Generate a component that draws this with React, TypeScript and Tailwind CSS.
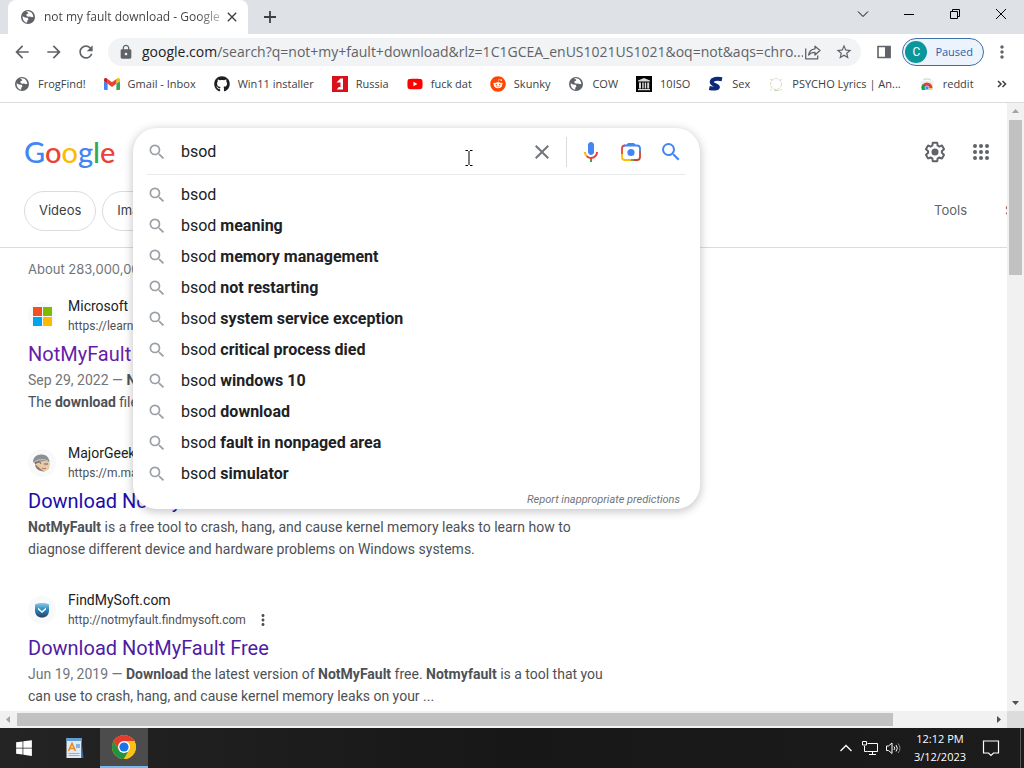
import { clsx } from "clsx";
import type { ReactNode } from "react";

// icons
import { FaGithub, FaReddit, FaWindows, FaYoutube } from "react-icons/fa";
import {
  MdArrowBack,
  MdArrowForward,
  MdClose,
  MdLock,
  MdMoreVert,
  MdRefresh,
  MdSearch,
  MdStarOutline,
} from "react-icons/md";

const GlobeIcon = () => (
  <svg viewBox="0 0 16 16" className="size-4 shrink-0">
    <circle cx="8" cy="8" r="7" fill="#5f6368" />
    <path
      d="M2.6 7.2 5 8.6l2.6.2.9 1.5-1.1 1.3-.3 2.1C4.600 13.500 2.500 11 2.600 7.200z"
      fill="#fff"
    />
    <path
      d="M6 2.700c2.700-1.200 5.500.2 6.700 2.700l.7 2.300-1.500.5-1.800-.7-1.900.3-1.800-1.100.2-1.600 1.600-.3-.2-1.300z"
      fill="#fff"
    />
  </svg>
);

const GmailIcon = () => (
  <svg viewBox="52 42 88 66" className="size-4 shrink-0">
    <path fill="#4285f4" d="M58 108h14V74L52 59v43c0 3.320 2.690 6 6 6" />
    <path fill="#34a853" d="M120 108h14c3.320 0 6-2.690 6-6V59l-20 15" />
    <path fill="#fbbc04" d="M120 48v26l20-15v-8c0-7.420-8.470-11.650-14.400-7.200" />
    <path fill="#ea4335" d="M72 74V48l24 18 24-18v26L96 92" />
    <path fill="#c5221f" d="M52 51v8l20 15V48l-5.600-4.200c-5.940-4.450-14.400-.22-14.400 7.200" />
  </svg>
);

const FlagIcon = () => (
  <svg viewBox="0 0 16 16" className="size-4 shrink-0">
    <rect width="16" height="16" fill="#d8121b" />
    <path d="M4.500 6.500 8.500 2.500H11v11H4.800L6.800 11h1.700V6.500z" fill="#fff" />
  </svg>
);

const MuseumIcon = () => (
  <svg viewBox="0 0 16 16" className="size-4 shrink-0">
    <rect width="16" height="16" fill="#000" />
    <path
      d="M2 4.500 8 2l6 2.500v1H2zM3 6.500h2v6H3zM6.200 6.500h1.500v6H6.200zM8.700 6.500h1.500v6H8.700zM11.200 6.500h2v6h-2zM2 13h12v1.300H2z"
      fill="#d8d8d8"
    />
  </svg>
);

const SwooshIcon = () => (
  <svg viewBox="0 0 16 16" className="size-4 shrink-0">
    <path
      d="M14 2.200C9.500 1.300 4.200 1.600 3.700 4.900c-.4 3 6.600 3.100 6.200 5.300-.3 1.800-5 1.600-8.600.8"
      transform="translate(0 1)"
      fill="none"
      stroke="#0b2a7a"
      strokeWidth="4"
    />
  </svg>
);

const WreathIcon = () => (
  <svg viewBox="0 0 16 16" className="size-4 shrink-0" fill="none">
    <circle cx="8" cy="8" r="5.500" stroke="#e3d7bb" strokeDasharray="3 1" />
    <path d="M2 3.500 4.500 4M13.500 3l-1.500 2M4 13l-2 1.500M12 13.500l2 .5" stroke="#d5d8da" />
    <path d="M6 14.500h5" stroke="#c8dcc0" />
  </svg>
);

const StoreIcon = () => (
  <svg viewBox="0 0 16 16" className="size-4 shrink-0">
    <path d="M5 4.500V3h6v1.500" fill="none" stroke="#c8ccd0" />
    <path d="M1.500 5h13L14 14H2z" fill="#eceff1" />
    <path d="M2.500 12a5.500 5.500 0 0 1 11 0l-3 .5h-5z" fill="#db4437" />
    <path d="M2.500 12c0-1.600.6-3 1.600-4l3 4.500L6.500 14H3z" fill="#0f9d58" />
    <path d="M13.500 12H9.500L8 14h5z" fill="#ffcd40" />
    <circle cx="8" cy="12" r="2" fill="#4285f4" stroke="#fff" strokeWidth=".6" />
  </svg>
);

const ShareIcon = () => (
  <svg
    viewBox="0 0 20 20"
    className="size-5"
    fill="none"
    stroke="#5f6368"
    strokeWidth="1.300"
    strokeLinejoin="round"
  >
    <path d="M2.700 6.500v10.300h12V13.500" />
    <path d="M12 4.200 17 8.600 12 13v-2.600c-3.200 0-5 .8-6.400 2.700.4-3.500 2.400-5.900 6.400-6.300z" />
  </svg>
);

const MicIcon = () => (
  <svg viewBox="0 0 24 24" className="size-6">
    <path
      fill="#4285f4"
      d="m12 15c1.660 0 3-1.310 3-2.970v-7.020c0-1.660-1.340-3.010-3-3.010s-3 1.340-3 3.010v7.020c0 1.660 1.340 2.970 3 2.970z"
    />
    <path fill="#34a853" d="m11 18.080h2v3.920h-2z" />
    <path
      fill="#fbbc05"
      d="m7.050 16.870c-1.270-1.330-2.050-2.830-2.050-4.870h2c0 1.450 0.560 2.420 1.470 3.380v0.320l-1.150 1.180z"
    />
    <path
      fill="#ea4335"
      d="m12 16.930a4.970 5.250 0 0 1-3.540-1.550l-1.410 1.490c1.260 1.340 3.020 2.130 4.950 2.130 3.870 0 6.990-2.920 6.990-7h-1.990c0 2.920-2.240 4.930-5 4.930z"
    />
  </svg>
);

const LensIcon = () => (
  <svg viewBox="0 0 24 24" className="size-6" fill="none" strokeWidth="1.800">
    <path d="M3 14V8.500a3 3 0 0 1 3-3" stroke="#ea4335" />
    <path d="M3 14v3a3 3 0 0 0 3 3h6" stroke="#fbbc04" />
    <path d="M12 20h3" stroke="#34a853" />
    <path d="M15 20h3a3 3 0 0 0 3-3v-6" stroke="#c5472f" />
    <path d="M5 5.500h13a3 3 0 0 1 3 3v2.500" stroke="#4285f4" />
    <path d="M7 5.500 9 3h6l2 2.500z" fill="#4285f4" />
    <circle cx="12" cy="12.500" r="3.600" fill="#4285f4" />
  </svg>
);

const GearIcon = () => (
  <svg viewBox="0 0 24 24" className="size-6" fill="#5f6368">
    <path d="M13.850 22.250h-3.700c-.74 0-1.360-.54-1.450-1.270l-.27-1.890c-.27-.14-.53-.29-.79-.46l-1.800.72c-.7.26-1.470-.03-1.810-.65L2.200 15.530c-.35-.66-.2-1.440.36-1.880l1.530-1.190c-.01-.15-.02-.3-.02-.46 0-.15.01-.31.02-.46l-1.520-1.190c-.59-.45-.74-1.260-.37-1.880l1.850-3.190c.34-.62 1.110-.9 1.790-.63l1.810.73c.26-.17.52-.32.78-.46l.27-1.910c.09-.7.71-1.250 1.440-1.250h3.700c.74 0 1.360.54 1.450 1.270l.27 1.890c.27.14.53.29.79.46l1.800-.72c.71-.26 1.480.03 1.820.65l1.840 3.180c.36.66.2 1.440-.36 1.880l-1.520 1.190c.01.15.02.3.02.46s-.01.31-.02.46l1.520 1.190c.56.45.72 1.230.37 1.860l-1.860 3.220c-.34.62-1.110.9-1.800.63l-1.800-.72c-.26.17-.52.32-.78.46l-.27 1.910c-.1.68-.72 1.220-1.460 1.220zm-3.230-2h2.760l.37-2.550.53-.22c.44-.18.88-.44 1.340-.78l.45-.34 2.380.96 1.380-2.400-2.030-1.580.07-.56c.03-.26.06-.51.06-.78s-.03-.53-.06-.78l-.07-.56 2.030-1.580-1.390-2.400-2.390.96-.45-.35c-.42-.32-.87-.58-1.330-.77l-.52-.22-.37-2.550h-2.760l-.37 2.550-.53.21c-.44.19-.88.44-1.340.79l-.45.33-2.380-.95-1.390 2.390 2.030 1.580-.07.56a7 7 0 0 0-.06.79c0 .26.02.53.06.78l.07.56-2.030 1.580 1.380 2.400 2.390-.96.45.35c.43.33.86.58 1.330.77l.53.22.38 2.550z" />
    <circle cx="12" cy="12" r="3.500" />
  </svg>
);

const AppsIcon = () => (
  <svg viewBox="0 0 24 24" className="size-6" fill="#5f6368">
    {[6, 12, 18].map((y) =>
      [6, 12, 18].map((x) => <circle key={`${x}-${y}`} cx={x} cy={y} r="2" />)
    )}
  </svg>
);

const MicrosoftIcon = () => (
  <svg viewBox="0 0 19 19" className="size-[19px]">
    <path fill="#f25022" d="M0 0h9v9H0z" />
    <path fill="#7fba00" d="M10 0h9v9h-9z" />
    <path fill="#00a4ef" d="M0 10h9v9H0z" />
    <path fill="#ffb900" d="M10 10h9v9h-9z" />
  </svg>
);

const GeekIcon = () => (
  <svg viewBox="0 0 20 20" className="size-5">
    <path d="M3 9c2-2 11-2 15 1l-1 6-5 3-6-3z" fill="#e8c9a4" />
    <path d="M1 9C1 4 5 1 10 1.500c5 .3 7.500 4 7.500 7.500-5-2-10-1-14 2z" fill="#8f8f93" />
    <path d="M2 9.500c3-3 9-4 14-1.500" stroke="#c9c9cc" fill="none" />
    <path d="M3 10.500c3-2 5-2 6 0M12 11h4" stroke="#6d5f58" strokeWidth="1.200" fill="none" />
    <path d="M3 11c0 3 2 6 6 7l3 .5-4-3z" fill="#8b7a70" />
    <path d="M10 15.500h4" stroke="#b9736a" />
  </svg>
);

const FindMySoftIcon = () => (
  <svg viewBox="0 0 16 16" className="size-4">
    <defs>
      <linearGradient id="soft" x1="0" y1="0" x2="0" y2="1">
        <stop offset="0" stopColor="#8fc9e6" />
        <stop offset=".45" stopColor="#2a8bc4" />
        <stop offset="1" stopColor="#2b3f5c" />
      </linearGradient>
    </defs>
    <path d="M1 2.500C3 .5 13 .5 15 2.500v6C15 13 12 15.500 8 15.500S1 13 1 8.500z" fill="url(#soft)" />
    <path d="M4 5.500 8 9l4-3.500v2L8 11 4 7.500z" fill="#fff" />
  </svg>
);

const WordpadIcon = () => (
  <svg viewBox="0 0 20 22" className="size-[22px]">
    <path d="M1.500 1h15v20h-15z" fill="#dfe9f3" />
    <path d="M1.500 1h15v3h-15z" fill="#5f9fd6" />
    <path d="M16.500 3.500 18.500 21h-2z" fill="#2f6ba8" />
    <path d="M3.500 14 7 6.500l3.500 7.500M5 11.500h4" stroke="#f08a1d" strokeWidth="1.600" fill="none" />
    <path d="M11 8h4M11 10h4" stroke="#2f7fd0" />
    <path d="M3.500 16.500h11M3.500 18.500h11" stroke="#8fb3d6" />
  </svg>
);

const ChromeIcon = () => (
  <svg viewBox="0 0 24 24" className="size-6">
    <circle cx="12" cy="12" r="12" fill="#fbc116" />
    <path d="M1.610 6A12 12 0 0 1 22.390 6H12L6.800 15z" fill="#e33b2e" />
    <path d="M1.610 6 6.800 15 12 18l-1.600 5.900A12 12 0 0 1 1.610 6z" fill="#229342" />
    <path d="M12 24 17.200 15H12l-5.200 0 5.200 3-3.200 5.600z" fill="#229342" />
    <path d="M22.390 6H12v6l5.200 3L12 24A12 12 0 0 0 22.390 6z" fill="#fbc116" />
    <circle cx="12" cy="12" r="6" fill="#fff" />
    <circle cx="12" cy="12" r="4.600" fill="#1a73e8" />
  </svg>
);

const bookmarks: { label: string; icon: ReactNode }[] = [
  { label: "FrogFind!", icon: <GlobeIcon /> },
  { label: "Gmail - Inbox", icon: <GmailIcon /> },
  { label: "Win11 installer", icon: <FaGithub className="size-4 shrink-0 text-[#1b1f23]" /> },
  { label: "Russia", icon: <FlagIcon /> },
  { label: "fuck dat", icon: <FaYoutube className="size-4 shrink-0 text-[#f00]" /> },
  { label: "Skunky", icon: <FaReddit className="size-4 shrink-0 text-[#ff4500]" /> },
  { label: "COW", icon: <GlobeIcon /> },
  { label: "10ISO", icon: <MuseumIcon /> },
  { label: "Sex", icon: <SwooshIcon /> },
  { label: "PSYCHO Lyrics | An...", icon: <WreathIcon /> },
  { label: "reddit", icon: <StoreIcon /> },
];

const suggestions = [
  "",
  "meaning",
  "memory management",
  "not restarting",
  "system service exception",
  "critical process died",
  "windows 10",
  "download",
  "fault in nonpaged area",
  "simulator",
];

const TabStrip = () => (
  <div className="flex h-[34px] shrink-0 bg-[#dee1e6] pl-2">
    <div className="flex w-60 items-center rounded-t-lg bg-white pl-3 pr-2">
      <GlobeIcon />
      <span className="ml-2 flex-1 whitespace-nowrap bg-linear-to-r from-[#3c4043] from-85% to-[#d0d2d4] bg-clip-text text-xs text-transparent">
        not my fault download - Google
      </span>
      <button type="button" aria-label="Close tab" className="text-[#3c4043]">
        <MdClose className="size-4" />
      </button>
    </div>
    <button type="button" aria-label="New tab" className="ml-3 text-[#3c4043]">
      <svg viewBox="0 0 20 20" className="size-5" stroke="currentColor" strokeWidth="1.800">
        <path d="M10 4v12M4 10h12" />
      </svg>
    </button>
    <div className="ml-auto flex h-7 text-black">
      <WindowButton label="Search tabs">
        <path d="m1 3.500 5 5 5-5" />
      </WindowButton>
      <WindowButton label="Minimize">
        <path d="M1 6.500h10" />
      </WindowButton>
      <WindowButton label="Restore">
        <path d="M1.500 3.500h7v7h-7zM3.500 3.500v-2h7v7h-2" />
      </WindowButton>
      <WindowButton label="Close">
        <path d="m1 1 10 10M11 1 1 11" />
      </WindowButton>
    </div>
  </div>
);

const WindowButton = ({ label, children }: { label: string; children: ReactNode }) => (
  <button type="button" aria-label={label} className="flex w-[46px] items-center justify-center">
    <svg viewBox="0 0 12 12" className="size-3" fill="none" stroke="currentColor">
      {children}
    </svg>
  </button>
);

const Toolbar = () => (
  <div className="flex h-9 shrink-0 items-center bg-white pl-3 pr-3 text-[#5f6368]">
    <div className="flex gap-3">
      <button type="button" aria-label="Back">
        <MdArrowBack className="size-5" />
      </button>
      <button type="button" aria-label="Forward">
        <MdArrowForward className="size-5" />
      </button>
      <button type="button" aria-label="Reload">
        <MdRefresh className="size-5" />
      </button>
    </div>
    <div className="ml-3 flex h-7 min-w-0 flex-1 items-center rounded-full bg-[#f1f3f4] pl-[10px] pr-2">
      <MdLock className="size-4 shrink-0" />
      <p className="ml-2 min-w-0 flex-1 overflow-hidden whitespace-nowrap text-sm">
        <span className="text-[#202124]">google.com</span>
        /search?q=not+my+fault+download&amp;rlz=1C1GCEA_enUS1021US1021&amp;oq=not&amp;aqs=chro...
      </p>
      <button type="button" aria-label="Share this page">
        <ShareIcon />
      </button>
      <button type="button" aria-label="Bookmark this tab" className="ml-3">
        <MdStarOutline className="size-[18px]" />
      </button>
    </div>
    <button type="button" aria-label="Side panel" className="ml-[15px]">
      <svg viewBox="0 0 16 16" className="size-4">
        <path d="M2 2.500h12v11H2z" fill="none" stroke="#5f6368" strokeWidth="1.600" />
        <path d="M9 2h5.500v12H9z" fill="#5f6368" />
      </svg>
    </button>
    <button
      type="button"
      className="ml-[10px] flex h-7 items-center gap-2 rounded-full border border-[#3d6ea8] bg-[#edf3fd] pl-[2px] pr-[10px] text-[11px] text-[#2a5db0]"
    >
      <span className="flex size-[22px] items-center justify-center rounded-full bg-[#0a979b] font-['Roboto',sans-serif] text-xs text-white">
        C
      </span>
      Paused
    </button>
    <button type="button" aria-label="Menu" className="ml-2">
      <MdMoreVert className="size-5" />
    </button>
  </div>
);

const BookmarksBar = () => (
  <nav className="flex h-[33px] shrink-0 items-start gap-[18px] border-b border-[#dadce0] bg-white px-[14px] pt-[6px] text-[11px] text-[#3c4043]">
    {bookmarks.map((b) => (
      <a key={b.label} href="#" className="flex items-center gap-2 whitespace-nowrap">
        {b.icon}
        {b.label}
      </a>
    ))}
    <button type="button" aria-label="More bookmarks" className="ml-auto text-[#3c4043]">
      <svg viewBox="0 0 16 16" className="size-4" fill="none" stroke="currentColor" strokeWidth="1.500">
        <path d="m4 5 3 3-3 3M8.500 5l3 3-3 3" />
      </svg>
    </button>
  </nav>
);

const SearchBox = () => (
  <form className="relative h-12 w-[567px] shrink-0">
    <div className="absolute inset-x-0 top-0 z-10 rounded-3xl bg-white shadow-[0_2px_8px_1px_rgba(64,60,67,0.28)]">
      <div className="flex h-[46px] items-center pt-[2px] pl-[14px] pr-[17px]">
        <MdSearch className="size-5 text-[#9aa0a6]" />
        <input
          type="text"
          aria-label="Search"
          defaultValue="bsod"
          className="ml-[14px] min-w-0 flex-1 bg-transparent text-base text-[#202124] outline-none"
        />
        <button type="button" aria-label="Clear" className="text-[#70757a]">
          <MdClose className="size-6" />
        </button>
        <div className="ml-3 h-[30px] border-l border-[#dadce0]" />
        <div className="ml-3 flex gap-4">
          <button type="button" aria-label="Search by voice">
            <MicIcon />
          </button>
          <button type="button" aria-label="Search by image">
            <LensIcon />
          </button>
          <button type="submit" aria-label="Google Search" className="text-[#4285f4]">
            <MdSearch className="size-6" />
          </button>
        </div>
      </div>
      <ul className="mx-[14px] border-t border-[#e8eaed] pt-1 text-base text-[#202124]">
        {suggestions.map((s) => (
          <li key={s}>
            <button type="button" className="flex h-[31px] w-full items-center gap-[14px] text-left">
              <MdSearch className="size-5 text-[#9aa0a6]" />
              <span>
                bsod <b className="font-bold">{s}</b>
              </span>
            </button>
          </li>
        ))}
      </ul>
      <div className="flex h-5 items-end justify-end pr-5 pb-[1px]">
        <a href="#" className="text-[11px] italic text-[#70757a]">
          Report inappropriate predictions
        </a>
      </div>
      {/* text cursor */}
      <svg
        viewBox="0 0 8 16"
        className="absolute left-[332px] top-[22px] h-4 w-2"
        fill="none"
        stroke="#000"
      >
        <path d="M.5.500H3M5 .500h2.500M.5 15.500H3M5 15.500h2.500M4 1v14" />
      </svg>
    </div>
  </form>
);

const logoLetters = [
  ["G", "text-[#4285f4]"],
  ["o", "text-[#ea4335]"],
  ["o", "text-[#fbbc05]"],
  ["g", "text-[#4285f4]"],
  ["l", "text-[#34a853]"],
  ["e", "text-[#ea4335]"],
];

type ResultProps = {
  icon: ReactNode;
  site: string;
  url: string;
  title: string;
  titleClass: string;
  children: ReactNode;
};

const Result = ({ icon, site, url, title, titleClass, children }: ResultProps) => (
  <article className="max-w-[600px]">
    <div className="flex items-center gap-3">
      <span className="flex size-7 items-center justify-center rounded-full bg-[#f8f9fa]">
        {icon}
      </span>
      <div>
        <p className="text-sm text-[#202124]">{site}</p>
        <p className="flex h-5 items-center gap-2 text-xs text-[#4d5156]">
          {url}
          <button type="button" aria-label="About this result">
            <MdMoreVert className="size-[18px]" />
          </button>
        </p>
      </div>
    </div>
    <h3 className={clsx("mt-[5px] text-xl/[26px]", titleClass)}>
      <a href="#">{title}</a>
    </h3>
    <p className="mt-[2px] text-sm/[22px] text-[#4d5156]">{children}</p>
  </article>
);

const ResultsPage = () => (
  <main className="min-w-0 flex-1 overflow-hidden bg-white font-['Roboto',sans-serif]">
    <header className="border-b border-[#dadce0] pt-[25px]">
      <div className="flex items-center pl-6 pr-[14px]">
        <a
          href="#"
          aria-label="Google"
          className="w-[109px] font-['Lato',sans-serif] text-[29px]/[40px] font-medium"
        >
          {logoLetters.map(([letter, color], i) => (
            <span key={i} className={color}>
              {letter}
            </span>
          ))}
        </a>
        <SearchBox />
        <div className="ml-auto flex gap-[22px]">
          <button type="button" aria-label="Settings">
            <GearIcon />
          </button>
          <button type="button" aria-label="Google apps">
            <AppsIcon />
          </button>
        </div>
      </div>
      <div className="mt-[15px] mb-4 flex items-center pl-6 font-['Inter',sans-serif] text-[13px]">
        <div className="flex gap-[6px] text-[#3c4043]">
          <a href="#" className="flex h-10 items-center rounded-full border border-[#dadce0] px-[14px]">
            Videos
          </a>
          <a href="#" className="flex h-10 items-center rounded-full border border-[#dadce0] px-[14px]">
            Images
          </a>
        </div>
        <div className="-mr-9 ml-auto flex gap-[38px] whitespace-nowrap text-[#5f6368]">
          <button type="button">Tools</button>
          <span className="w-[38px]">Safe</span>
        </div>
      </div>
    </header>
    <div className="pl-7">
      <p className="pt-[11px] font-['Inter',sans-serif] text-[13px]/[20px] text-[#70757a]">
        About 283,000,000 results
      </p>
      <div className="mt-[17px] flex flex-col gap-[30px]">
        <Result
          icon={<MicrosoftIcon />}
          site="Microsoft"
          url="https://learn.microsoft.com"
          title="NotMyFault - Sysinternals"
          titleClass="text-[#681da8]"
        >
          <span className="text-[#70757a]">Sep 29, 2022 — </span>
          <b>NotMyFault</b> is a tool that you can use to crash your system.
          <br />
          The <b>download</b> file contains both versions.
        </Result>
        <Result
          icon={<GeekIcon />}
          site="MajorGeeks"
          url="https://m.majorgeeks.com"
          title="Download NotMy"
          titleClass="text-[#1a0dab]"
        >
          <b>NotMyFault</b> is a free tool to crash, hang, and cause kernel memory leaks to
          learn how to diagnose different device and hardware problems on Windows systems.
        </Result>
        <Result
          icon={<FindMySoftIcon />}
          site="FindMySoft.com"
          url="http://notmyfault.findmysoft.com"
          title="Download NotMyFault Free"
          titleClass="text-[#4f1ba3]"
        >
          <span className="text-[#70757a]">Jun 19, 2019 — </span>
          <b>Download</b> the latest version of <b>NotMyFault</b> free. <b>Notmyfault</b> is a
          tool that you can use to crash, hang, and cause kernel memory leaks on your ...
        </Result>
      </div>
    </div>
  </main>
);

const Arrow = ({ d, fill }: { d: string; fill: string }) => (
  <svg viewBox="0 0 17 17" className="size-[17px] shrink-0" fill={fill}>
    <path d={d} />
  </svg>
);

const VerticalScrollbar = () => (
  <div className="flex w-[17px] shrink-0 flex-col bg-[#f1f1f1]">
    <Arrow d="M8.500 6 12 10H5z" fill="#a3a3a3" />
    <div className="flex-1 px-[2px]">
      <div className="h-[27%] bg-[#c1c1c1]" />
    </div>
    <Arrow d="M8.500 11 12 7H5z" fill="#505050" />
  </div>
);

const HorizontalScrollbar = () => (
  <div className="flex h-[17px] shrink-0 bg-[#f1f1f1]">
    <Arrow d="M6 8.500 10 5v7z" fill="#a3a3a3" />
    <div className="flex-1 py-[2px]">
      <div className="h-full w-[90%] bg-[#c1c1c1]" />
    </div>
    <Arrow d="M11 8.500 7 5v7z" fill="#505050" />
    <div className="w-[17px] bg-[#dcdcdc]" />
  </div>
);

const Taskbar = () => (
  <footer className="flex h-10 shrink-0 items-stretch bg-linear-to-r from-[#242424] via-[#171717] to-[#1c1c1c] text-white">
    <button type="button" aria-label="Start" className="flex w-12 items-center justify-center">
      <FaWindows className="size-[18px]" />
    </button>
    <button type="button" aria-label="WordPad" className="ml-[2px] flex w-[50px] items-center justify-center">
      <WordpadIcon />
    </button>
    <button
      type="button"
      aria-label="Chrome"
      className="flex w-12 items-center justify-center border-b-2 border-[#76b9ed] bg-[#4c4c4c]"
    >
      <ChromeIcon />
    </button>
    <div className="ml-auto flex items-center">
      <button type="button" aria-label="Show hidden icons">
        <svg viewBox="0 0 16 16" className="size-4" fill="none" stroke="currentColor" strokeWidth="1.300">
          <path d="m2.500 11 5.500-5.500 5.500 5.500" />
        </svg>
      </button>
      <button type="button" aria-label="Network" className="ml-2">
        <svg viewBox="0 0 16 16" className="size-4" fill="none" stroke="currentColor">
          <path d="M5.500 3.500h10v8h-10M10.500 12v2.500M7 14.500h7M2.500 6v5.500h3" />
          <path d="M.5 1.500h4v3.500h-4z" />
        </svg>
      </button>
      <button type="button" aria-label="Volume" className="ml-2">
        <svg viewBox="0 0 16 16" className="size-4" fill="none" stroke="currentColor">
          <path d="M.5 6v4.500h2L6 13.500V3L2.500 6z" />
          <path d="M8 6.500q1.500 1.700 0 3.500M10 5q2.700 3.200 0 6.500" />
          <path d="M12 3.500q4 4.700 0 9.500" stroke="#8a8a8a" />
        </svg>
      </button>
      <div className="ml-2 w-[60px] text-center text-[11px]/[18px]">
        <p>12:12 PM</p>
        <p>3/12/2023</p>
      </div>
      <button type="button" aria-label="Notifications" className="ml-3">
        <svg viewBox="0 0 18 18" className="size-[18px]" fill="none" stroke="currentColor" strokeWidth="1.200">
          <path d="M1.500 2h15v12h-5L9 16.500 6.500 14h-5z" />
        </svg>
      </button>
      <div className="ml-5 h-10 w-1 border-l border-[#5a5a5a]" />
    </div>
  </footer>
);

export default function App() {
  return (
    <div className="flex h-screen flex-col overflow-hidden font-['Open_Sans','Noto_Sans',sans-serif]">
      <TabStrip />
      <Toolbar />
      <BookmarksBar />
      <div className="flex min-h-0 flex-1">
        <ResultsPage />
        <VerticalScrollbar />
      </div>
      <HorizontalScrollbar />
      <Taskbar />
    </div>
  );
}
